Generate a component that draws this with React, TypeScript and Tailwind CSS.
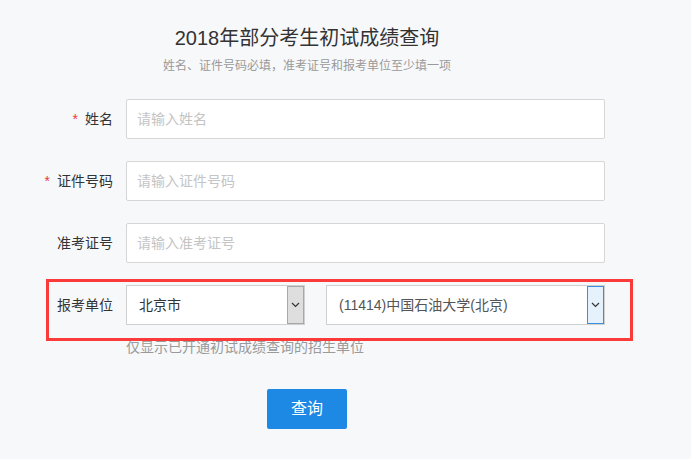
const font = { fontFamily: '"Liberation Sans", "Noto Sans CJK SC", sans-serif' };

function Chevron() {
    return (
        <svg width="9" height="6" viewBox="0 0 9 6" fill="none">
            <path d="M1 1l3.5 3.5L8 1" stroke="#333" strokeWidth="1.2" />
        </svg>
    );
}

function Field({ label, placeholder, required }: { label: string; placeholder: string; required?: boolean }) {
    return (
        <div className="flex items-center">
            <div className="w-[113px] text-right text-[14px] text-[#333]">
                {required && <span className="mr-[7px] text-[#e63b3b]">*</span>}
                {label}
            </div>
            <input
                className="ml-[13px] h-[40px] w-[479px] rounded-[2px] border border-[#d6d6d6] bg-white px-[10px] text-[14px] outline-none placeholder:text-[#c4c4c4]"
                placeholder={placeholder}
                style={font}
            />
        </div>
    );
}

export default function App() {
    return (
        <div className="h-[459px] w-full bg-[#f7f8fa]" style={font}>
            <div className="w-[614px] pt-[24px]">
                <h1 className="text-center text-[20px] leading-[28px] text-[#333]">2018年部分考生初试成绩查询</h1>
                <p className="mt-[6px] text-center text-[12px] leading-[16px] text-[#9a9a9a]">
                    姓名、证件号码必填，准考证号和报考单位至少填一项
                </p>

                <div className="mt-[25px] flex flex-col gap-[22px]">
                    <Field label="姓名" placeholder="请输入姓名" required />
                    <Field label="证件号码" placeholder="请输入证件号码" required />
                    <Field label="准考证号" placeholder="请输入准考证号" />

                    <div className="relative flex items-center">
                        <div className="w-[113px] text-right text-[14px] text-[#333]">报考单位</div>
                        <div className="ml-[13px] flex h-[40px] w-[179px] border border-[#d0d0d0] bg-white">
                            <span className="flex-1 pl-[12px] text-[14px] leading-[38px] text-[#333]">北京市</span>
                            <span className="flex w-[17px] items-center justify-center border border-[#a8a8a8] bg-[#dedede]">
                                <Chevron />
                            </span>
                        </div>
                        <div className="ml-[21px] flex h-[40px] w-[279px] border border-[#d0d0d0] bg-white">
                            <span className="flex-1 pl-[12px] text-[14px] leading-[38px] text-[#555]">(11414)中国石油大学(北京)</span>
                            <span className="flex w-[17px] items-center justify-center border border-[#3c8fdc] bg-[#e5f1fb]">
                                <Chevron />
                            </span>
                        </div>
                        <div className="pointer-events-none absolute top-[-6px] left-[46px] h-[62px] w-[587px] border-[3px] border-[#fb3a3a]" />
                    </div>
                </div>

                <p className="mt-[12px] ml-[126px] text-[14px] leading-[20px] text-[#9a9a9a]">仅显示已开通初试成绩查询的招生单位</p>

                <div className="mt-[32px] flex justify-center">
                    <button className="h-[40px] w-[80px] rounded-[2px] bg-[#1e88e5] text-[16px] text-white">查询</button>
                </div>
            </div>
        </div>
    );
}
